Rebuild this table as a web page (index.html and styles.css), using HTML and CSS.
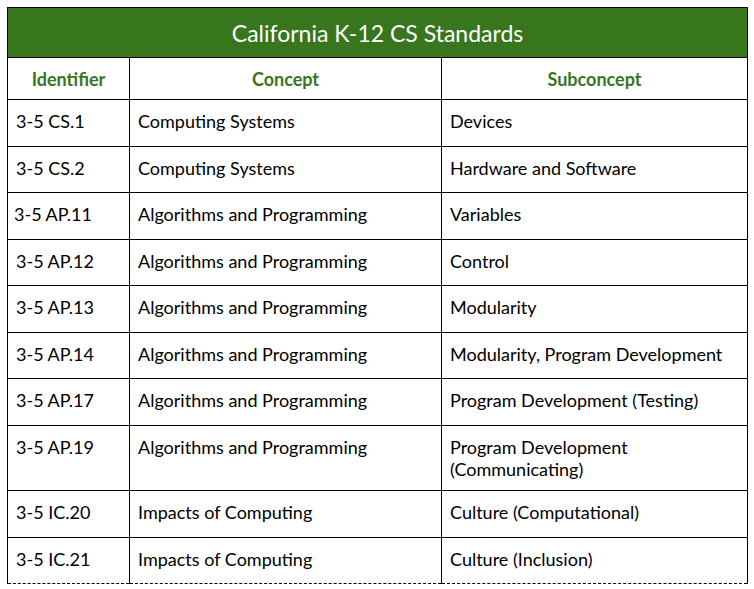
FILE: index.html
```html
<!DOCTYPE html>
<html lang="en">
<head>
<meta charset="utf-8">
<title>California K-12 CS Standards</title>
<link rel="stylesheet" href="styles.css">
</head>
<body>
<table class="standards">
  <colgroup>
    <col class="col-id">
    <col class="col-concept">
    <col class="col-sub">
  </colgroup>
  <thead>
    <tr class="title-row"><th colspan="3" class="title">California K-12 CS Standards</th></tr>
    <tr class="head-row">
      <th>Identifier</th>
      <th>Concept</th>
      <th>Subconcept</th>
    </tr>
  </thead>
  <tbody>
    <tr><td>3-5 CS.1</td><td>Computing Systems</td><td>Devices</td></tr>
    <tr><td>3-5 CS.2</td><td>Computing Systems</td><td>Hardware and Software</td></tr>
    <tr><td class="tight">3-5 AP.11</td><td>Algorithms and Programming</td><td>Variables</td></tr>
    <tr><td>3-5 AP.12</td><td>Algorithms and Programming</td><td>Control</td></tr>
    <tr><td>3-5 AP.13</td><td>Algorithms and Programming</td><td>Modularity</td></tr>
    <tr><td>3-5 AP.14</td><td>Algorithms and Programming</td><td>Modularity, Program Development</td></tr>
    <tr><td>3-5 AP.17</td><td>Algorithms and Programming</td><td>Program Development (Testing)</td></tr>
    <tr><td>3-5 AP.19</td><td>Algorithms and Programming</td><td>Program Development<br>(Communicating)</td></tr>
    <tr><td>3-5 IC.20</td><td>Impacts of Computing</td><td>Culture (Computational)</td></tr>
    <tr class="last"><td>3-5 IC.21</td><td>Impacts of Computing</td><td>Culture (Inclusion)</td></tr>
  </tbody>
</table>
</body>
</html>
```

FILE: styles.css
```css
html, body {
  background: #ffffff;
}
body {
  margin: 0;
  padding: 7px 0 0 7px;
  font-family: Lato, "Liberation Sans", sans-serif;
  color: #000000;
}
.standards {
  border-collapse: collapse;
  table-layout: fixed;
  width: 740px;
}
.col-id { width: 122px; }
.col-concept { width: 312px; }
.col-sub { width: 306px; }

.standards th,
.standards td {
  border: 1px solid #000000;
  padding: 0 8px;
}
.title {
  background: #38761d;
  color: #ffffff;
  font-weight: 400;
  font-size: 23px;
  height: 49px;
  text-align: center;
  vertical-align: middle;
}
.head-row th {
  color: #38761d;
  font-weight: 700;
  font-size: 18px;
  height: 41px;
  text-align: center;
  vertical-align: middle;
}
.standards td {
  font-size: 18px;
  line-height: 22px;
  padding-top: 10px;
  padding-bottom: 10.5px;
  height: 25px;
  vertical-align: top;
  text-align: left;
}
.standards td.tight {
  padding-left: 6px;
}
.last td {
  border-bottom: 1px dashed #000000;
}
```
